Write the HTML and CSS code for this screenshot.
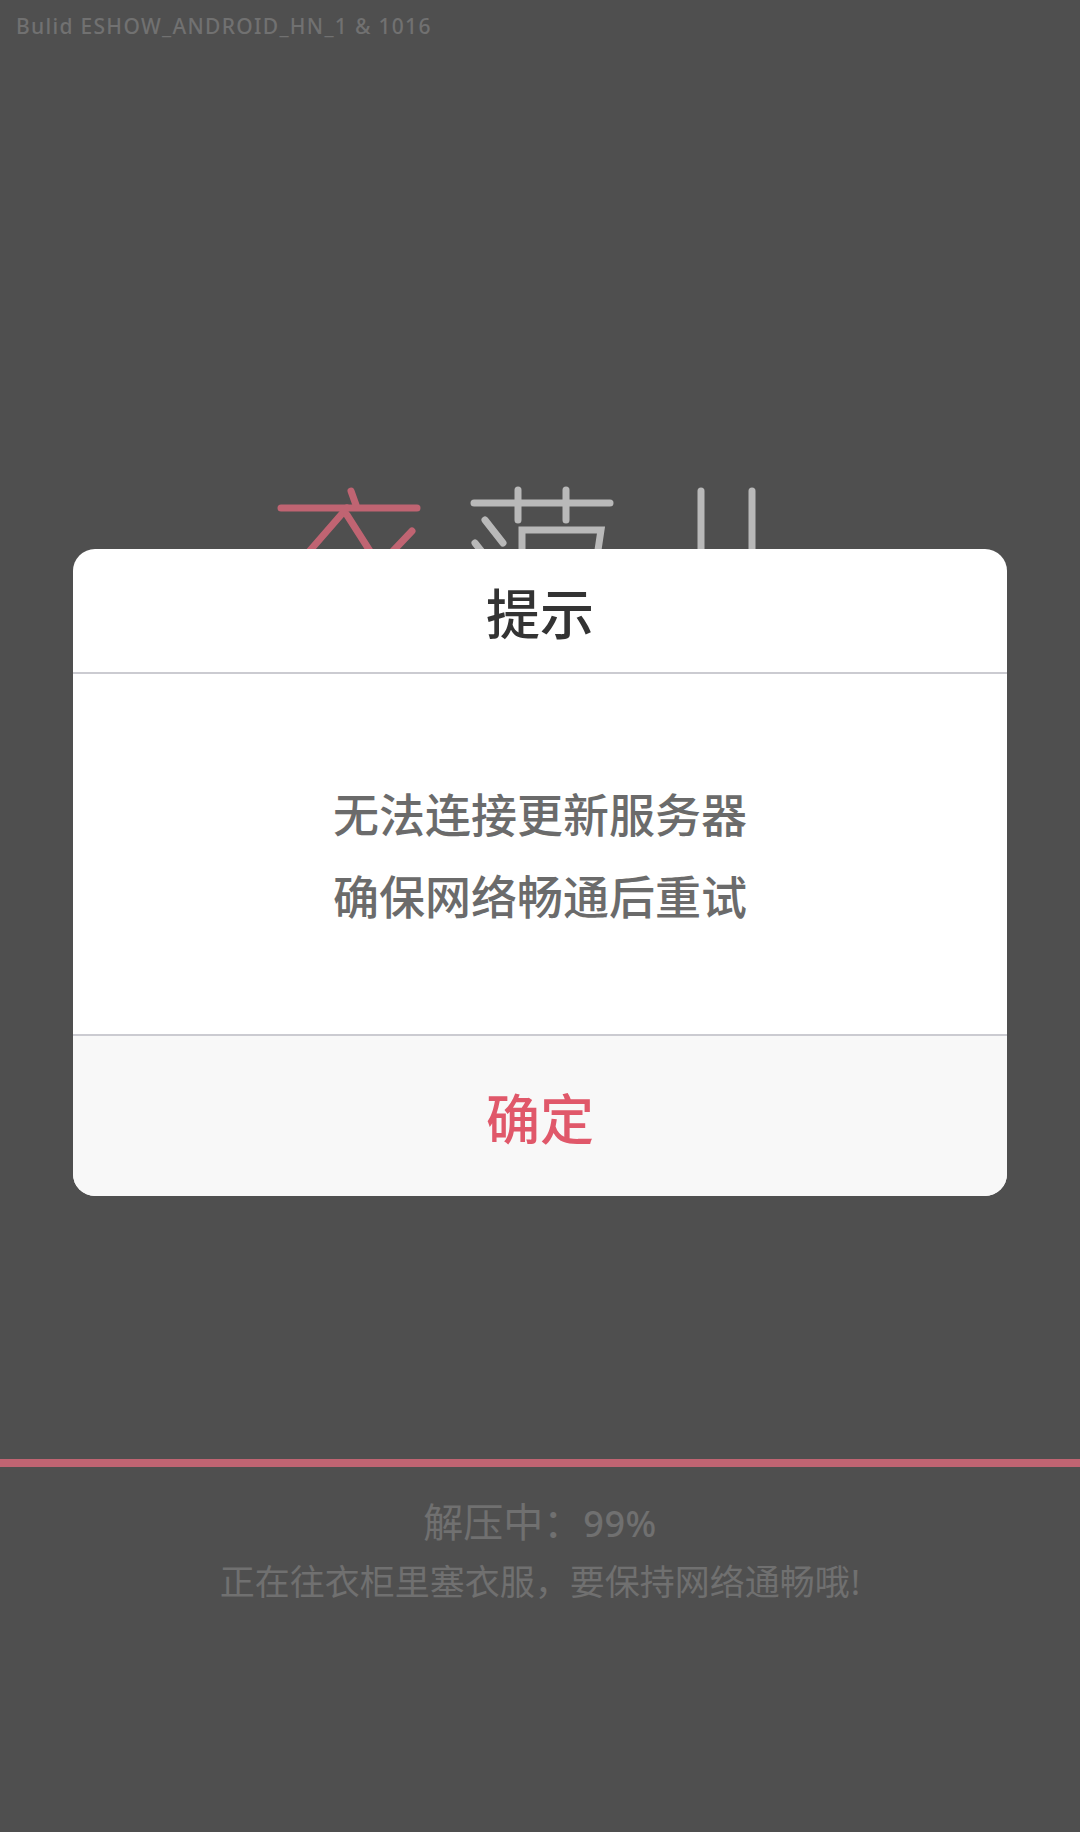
FILE: index.html
```html
<!DOCTYPE html>
<html lang="zh-CN">
<head>
<meta charset="utf-8">
<title>提示</title>
<link rel="stylesheet" href="styles.css">
</head>
<body>
<main class="screen">
  <p class="build">Bulid ESHOW_ANDROID_HN_1 &amp; 1016</p>
  <svg class="logo" viewBox="0 0 1080 120" width="1080" height="120" aria-hidden="true">
    <g class="logo-pink">
      <path d="M281 58H417"/>
      <path d="M351 41L356 55"/>
      <path d="M347 58L300 112"/>
      <path d="M347 65L382 120"/>
      <path d="M412 81L375 120"/>
    </g>
    <g class="logo-grey">
      <path d="M474 53H610"/>
      <path d="M518 40V70"/>
      <path d="M566 40V70"/>
      <path d="M485 70L503 93"/>
      <path d="M475 93L490 112"/>
      <path d="M522 120V80H601L595 120"/>
      <path d="M701 41V120"/>
      <path d="M752 41V120"/>
    </g>
  </svg>
  <div class="progress"></div>
  <p class="status">解压中：<span class="percent">99%</span></p>
  <p class="hint">正在往衣柜里塞衣服，要保持网络通畅哦<span class="bang">!</span></p>
</main>
<section class="dialog">
  <h1 class="dialog-title">提示</h1>
  <div class="dialog-body">
    <p>无法连接更新服务器</p>
    <p>确保网络畅通后重试</p>
  </div>
  <div class="dialog-action">确定</div>
</section>
</body>
</html>
```
FILE: styles.css
```css
* { box-sizing: border-box; }
html, body { margin: 0; padding: 0; }
body {
  width: 1080px;
  height: 1832px;
  overflow: hidden;
  position: relative;
  background: #4f4f4f;
  font-family: "Noto Sans", "Noto Sans CJK SC", sans-serif;
}
.screen {
  display: flex;
  flex-direction: column;
  align-items: center;
  height: 1832px;
}
p { margin: 0; }
.build {
  align-self: flex-start;
  padding: 11px 0 0 16px;
  height: 450px;
  font-size: 21px;
  line-height: 30px;
  font-weight: 500;
  letter-spacing: 1.3px;
  color: #717171;
  white-space: nowrap;
}
.logo {
  display: block;
  flex: none;
}
.logo path {
  fill: none;
  stroke-width: 7;
  stroke-linecap: round;
  stroke-linejoin: miter;
}
.logo-pink path { stroke: #c06472; }
.logo-grey path { stroke: #b9b9b9; }
.progress {
  flex: none;
  width: 100%;
  height: 8px;
  margin-top: 889px;
  background: #c06472;
}
.status {
  margin-top: 31px;
  font-size: 40px;
  line-height: 48px;
  color: #707070;
  white-space: nowrap;
}
.percent { font-size: 36px; font-weight: 500; letter-spacing: 0.5px; }
.hint {
  margin-top: 10px;
  font-size: 35px;
  line-height: 48px;
  color: #707070;
  white-space: nowrap;
}
.bang { margin-left: 1px; }
.dialog {
  position: absolute;
  left: 73px;
  top: 549px;
  width: 934px;
  height: 647px;
  display: flex;
  flex-direction: column;
  background: #fff;
  border-radius: 22px;
  overflow: hidden;
}
.dialog-title {
  flex: none;
  height: 125px;
  margin: 0;
  padding-top: 2px;
  display: flex;
  align-items: center;
  justify-content: center;
  border-bottom: 2px solid #cbcbd1;
  font-size: 54px;
  font-weight: 500;
  color: #333;
}
.dialog-body {
  flex: none;
  height: 362px;
  padding-top: 2px;
  display: flex;
  flex-direction: column;
  justify-content: center;
  align-items: center;
  border-bottom: 2px solid #cbcbd1;
  font-size: 46px;
  line-height: 82px;
  font-weight: 500;
  color: #6b6b6b;
}
.dialog-action {
  flex: 1;
  display: flex;
  align-items: center;
  justify-content: center;
  background: #f8f8f8;
  font-size: 54px;
  font-weight: 500;
  color: #e0586a;
}
```
